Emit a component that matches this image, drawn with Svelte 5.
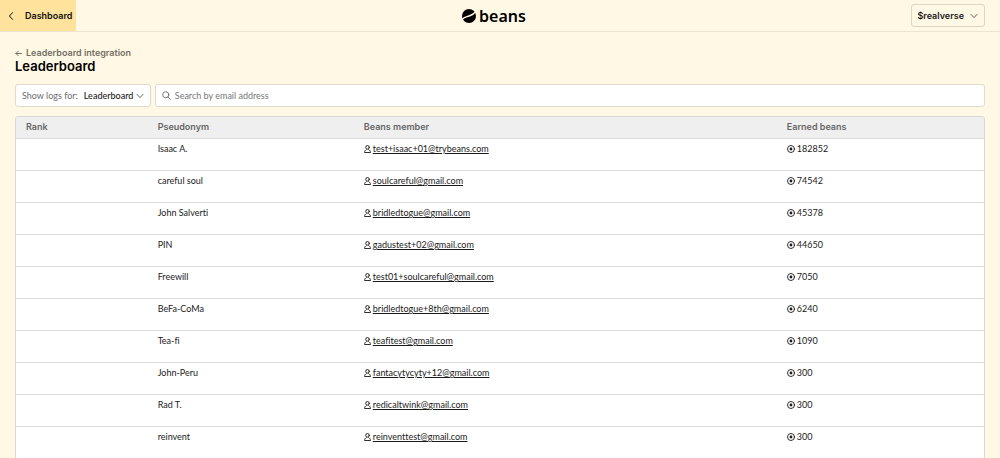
<script lang="ts">
  interface Member {
    rank?: number;
    pseudonym: string;
    email: string;
    beans: number;
  }

  const members: Member[] = [
    { pseudonym: 'Isaac A.', email: 'test+isaac+01@trybeans.com', beans: 182852 },
    { pseudonym: 'careful soul', email: 'soulcareful@gmail.com', beans: 74542 },
    { pseudonym: 'John Salverti', email: 'bridledtogue@gmail.com', beans: 45378 },
    { pseudonym: 'PIN', email: 'gadustest+02@gmail.com', beans: 44650 },
    { pseudonym: 'Freewill', email: 'test01+soulcareful@gmail.com', beans: 7050 },
    { pseudonym: 'BeFa-CoMa', email: 'bridledtogue+8th@gmail.com', beans: 6240 },
    { pseudonym: 'Tea-fi', email: 'teafitest@gmail.com', beans: 1090 },
    { pseudonym: 'John-Peru', email: 'fantacytycyty+12@gmail.com', beans: 300 },
    { pseudonym: 'Rad T.', email: 'redicaltwink@gmail.com', beans: 300 },
    { pseudonym: 'reinvent', email: 'reinventtest@gmail.com', beans: 300 },
  ];

  let search = $state('');
  let log = $state('Leaderboard');

  let visible = $derived(members.filter((m) => m.email.includes(search.trim().toLowerCase())));
</script>

{#snippet chevron()}
  <svg class="chevron" viewBox="0 0 8 8" aria-hidden="true">
    <path d="M1 2.4 4 5.6 7 2.4" />
  </svg>
{/snippet}

<header class="topbar">
  <a class="back" href="#dashboard">
    <svg viewBox="0 0 6 10" aria-hidden="true"><path d="M4.6 1.6 1.4 5l3.2 3.4" /></svg>
    Dashboard
  </a>
  <a class="logo" href="#home">
    <svg viewBox="0 0 14 14" aria-hidden="true">
      <circle cx="7" cy="7" r="7" />
      <path d="M.2 10.6C2.400 7.700 4.600 8 7 7s4.200-1.100 6.600-4.400" />
    </svg>
    beans
  </a>
  <button class="account" type="button">
    $realverse
    {@render chevron()}
  </button>
</header>

<main>
  <a class="crumb" href="#integration">
    <svg viewBox="0 0 7 7" aria-hidden="true"><path d="M6.4 3.5H1M3.200 1.300 1 3.500l2.200 2.200" /></svg>
    Leaderboard integration
  </a>
  <h1>Leaderboard</h1>

  <div class="filters">
    <div class="field logs">
      <label for="log">Show logs for:</label>
      <select id="log" bind:value={log}>
        <option>Leaderboard</option>
      </select>
      {@render chevron()}
    </div>
    <div class="field search">
      <svg class="glass" viewBox="0 0 10 10" aria-hidden="true">
        <circle cx="4.200" cy="4.200" r="3.400" /><path d="m6.700 6.700 2.700 2.700" />
      </svg>
      <input type="text" aria-label="Search by email address" placeholder="Search by email address" bind:value={search} />
    </div>
  </div>

  <div class="card">
    <table>
      <thead>
        <tr>
          <th class="rank">Rank</th>
          <th class="name">Pseudonym</th>
          <th class="member">Beans member</th>
          <th>Earned beans</th>
        </tr>
      </thead>
      <tbody>
        {#each visible as m (m.email)}
          <tr>
            <td>{m.rank ?? ''}</td>
            <td>{m.pseudonym}</td>
            <td>
              <span class="cell">
                <svg class="person" viewBox="0 0 7 8" aria-hidden="true">
                  <circle cx="3.500" cy="2.300" r="1.800" />
                  <path d="M2.300 4.600C1.200 5.200.5 6.100.5 7.500h6c0-1.400-.7-2.300-1.800-2.900" />
                </svg>
                <a href="mailto:{m.email}">{m.email}</a>
              </span>
            </td>
            <td>
              <span class="cell">
                <svg class="bean" viewBox="0 0 8 8" aria-hidden="true">
                  <circle cx="4" cy="4" r="3.500" />
                  <circle class="dot" cx="4" cy="4" r="1.400" />
                </svg>
                {m.beans}
              </span>
            </td>
          </tr>
        {/each}
      </tbody>
    </table>
  </div>
</main>

<style>
  :global(body) {
    background: #fff8e5;
    color: #1a1a1a;
    font-family: Lato, "Liberation Sans", sans-serif;
    font-size: 9px;
    font-variant-ligatures: none;
    line-height: 12px;
  }

  a {
    color: inherit;
    text-decoration: none;
  }

  svg {
    flex-shrink: 0;
    fill: none;
    stroke: currentColor;
    stroke-linecap: round;
    stroke-linejoin: round;
  }

  .topbar {
    display: grid;
    grid-template-columns: 1fr auto 1fr;
    align-items: center;
    height: 31px;
    border-bottom: 1px solid #ece4d0;
  }

  .back,
  .account,
  .crumb,
  h1,
  th {
    font-family: Inter, "Liberation Sans", sans-serif;
  }

  .back {
    display: flex;
    align-items: center;
    justify-self: start;
    gap: 11px;
    box-sizing: border-box;
    height: 31px;
    padding: 0 4px 0 8px;
    background: #ffe29b;
    color: #111;
    font-weight: 600;
  }

  .back svg {
    width: 6px;
    height: 10px;
  }

  .logo {
    display: flex;
    align-items: center;
    gap: 3px;
    margin-right: 12px;
    color: #000;
    font-family: "Noto Sans", "Open Sans", sans-serif;
    font-size: 16px;
    font-weight: 600;
    line-height: 24px;
  }

  .logo svg {
    width: 14px;
    height: 14px;
  }

  .logo circle {
    fill: #000;
    stroke: none;
  }

  .logo path {
    stroke: #fff8e5;
    stroke-width: 1.4;
  }

  .account {
    display: flex;
    align-items: center;
    justify-self: end;
    gap: 6px;
    height: 23px;
    margin-right: 15px;
    padding: 0 6px 0 5px;
    background: transparent;
    border: 1px solid #dcd5c4;
    border-radius: 3px;
    color: #1a1a1a;
    font-size: inherit;
    font-weight: 600;
    cursor: pointer;
  }

  .chevron {
    width: 8px;
    height: 8px;
    color: #555;
    stroke-width: 0.9;
    pointer-events: none;
  }

  main {
    padding: 15px 15px 16px;
  }

  .crumb {
    display: flex;
    align-items: center;
    gap: 4px;
    color: #746f64;
    font-weight: 600;
  }

  .crumb svg {
    width: 7px;
    height: 7px;
  }

  h1 {
    margin: 0 0 11px;
    color: #000;
    font-size: 13px;
    font-weight: 600;
    line-height: 14px;
  }

  .filters {
    display: flex;
    gap: 4px;
    margin-bottom: 9px;
  }

  .field {
    display: flex;
    align-items: center;
    box-sizing: border-box;
    height: 23px;
    padding: 0 6px;
    background: #fff;
    border: 1px solid #dedace;
    border-radius: 3px;
    color: #6c6c6c;
  }

  select,
  input {
    padding: 0;
    background: transparent;
    border: none;
    outline: none;
    font: inherit;
  }

  select {
    appearance: none;
    margin-left: 6px;
    margin-right: -8px;
    padding-right: 10px;
    color: #1a1a1a;
    font-weight: 500;
  }

  .search {
    flex: 1;
    gap: 4px;
  }

  .glass {
    width: 9px;
    height: 9px;
  }

  input {
    flex: 1;
    min-width: 0;
    color: #1a1a1a;
  }

  input::placeholder {
    color: #777;
    opacity: 1;
  }

  .card {
    overflow: hidden;
    background: #fff;
    border: 1px solid #d8d8d6;
    border-radius: 3px;
  }

  table {
    width: 100%;
    table-layout: fixed;
    border-collapse: separate;
    border-spacing: 0;
  }

  th,
  td {
    box-sizing: border-box;
    padding: 4px 10px;
    border-bottom: 1px solid #dcdcdc;
    text-align: left;
    vertical-align: top;
  }

  th {
    height: 22px;
    background: #efefef;
    color: #666;
    font-weight: 600;
  }

  td {
    height: 32px;
  }

  .rank {
    width: 13.6%;
  }

  .name {
    width: 21.3%;
  }

  .member {
    width: 43.7%;
  }

  .cell {
    display: flex;
    align-items: center;
    gap: 2px;
  }

  .cell a {
    text-decoration: underline;
  }

  .person {
    width: 7px;
    height: 8px;
    stroke-width: 0.9;
  }

  .bean {
    width: 8px;
    height: 8px;
    stroke-width: 0.9;
  }

  .dot {
    fill: currentColor;
    stroke: none;
  }
</style>
